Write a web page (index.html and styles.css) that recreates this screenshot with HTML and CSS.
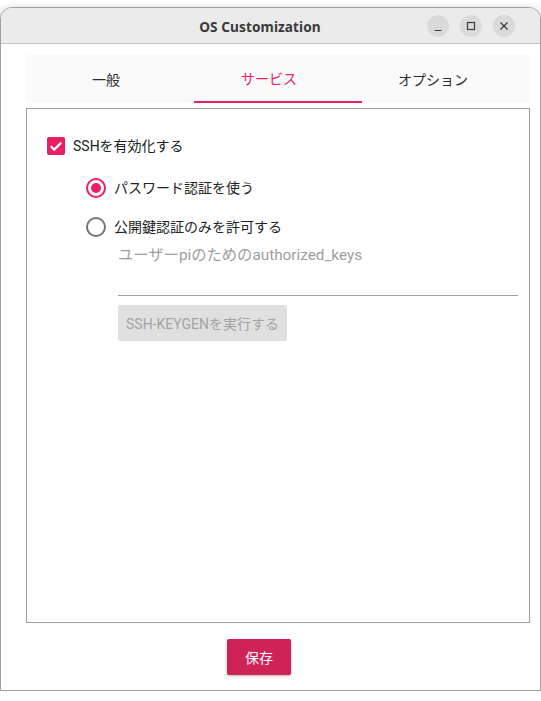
FILE: index.html
```html
<!DOCTYPE html>
<html lang="ja">
<head>
<meta charset="utf-8">
<title>OS Customization</title>
<link rel="stylesheet" href="styles.css">
</head>
<body>
<div class="window">
  <header class="titlebar">
    <div class="title">OS Customization</div>
    <div class="controls">
      <span class="ctl"><svg width="22" height="22" viewBox="0 0 22 22"><path d="M7.5 15.5h7" stroke="#3b3b3b" stroke-width="1.2" fill="none"/></svg></span>
      <span class="ctl"><svg width="22" height="22" viewBox="0 0 22 22"><rect x="7.5" y="7.5" width="7" height="7" stroke="#3b3b3b" stroke-width="1.2" fill="none"/></svg></span>
      <span class="ctl"><svg width="22" height="22" viewBox="0 0 22 22"><path d="M7.5 7.5l7 7M14.5 7.5l-7 7" stroke="#3b3b3b" stroke-width="1.3" fill="none"/></svg></span>
    </div>
  </header>
  <main class="content">
    <nav class="tabs">
      <div class="tab tab-1">一般</div>
      <div class="tab tab-2 active">サービス</div>
      <div class="tab tab-3">オプション</div>
    </nav>
    <section class="panel">
      <div class="row row-check">
        <span class="checkbox"><svg width="18" height="18" viewBox="0 0 18 18"><path d="M3.8 9.2l3.4 3.4 7-7" stroke="#fff" stroke-width="2.2" fill="none"/></svg></span>
        <span class="label">SSHを有効化する</span>
      </div>
      <div class="row row-radio row-radio-1">
        <span class="radio checked"></span>
        <span class="label">パスワード認証を使う</span>
      </div>
      <div class="row row-radio row-radio-2">
        <span class="radio"></span>
        <span class="label">公開鍵認証のみを許可する</span>
      </div>
      <div class="keys">
        <div class="field"><span class="placeholder">ユーザーpiのためのauthorized_keys</span></div>
        <button class="keygen" type="button">SSH-KEYGENを実行する</button>
      </div>
    </section>
    <div class="footer">
      <button class="save" type="button">保存</button>
    </div>
  </main>
</div>
</body>
</html>
```

FILE: styles.css
```css
html {
  margin: 0;
  padding: 0;
  background: #ffffff;
  overflow: hidden;
}

body {
  margin: 0;
  padding-top: 7px;
  font-family: Roboto, "Noto Sans CJK JP", sans-serif;
  font-size: 14px;
  color: #222222;
}

.window {
  box-sizing: border-box;
  width: 541px;
  border: 1px solid #a0a0a0;
  border-radius: 12px 12px 0 0;
  background: #ffffff;
  box-shadow: 0 3px 10px rgba(0, 0, 0, 0.3);
  overflow: hidden;
}

.titlebar {
  display: flex;
  align-items: center;
  height: 36px;
  box-sizing: border-box;
  background: #ebebeb;
  border-bottom: 1px solid #c4c4c4;
}

.title {
  flex: 1;
  text-align: center;
  padding-left: 92px;
  padding-top: 1px;
  font-family: "Noto Sans", "DejaVu Sans", sans-serif;
  font-weight: 700;
  font-size: 13.6px;
  color: #3a3a3a;
  letter-spacing: 0.1px;
}

.controls {
  display: flex;
  gap: 11px;
  padding-right: 25px;
  padding-top: 1px;
}

.ctl {
  width: 22px;
  height: 22px;
  border-radius: 50%;
  background: #dadada;
  display: flex;
}

.content {
  padding: 11px 10px 15px 25px;
}

.tabs {
  display: flex;
  width: 504px;
  height: 48px;
  background: #fafafa;
}

.tab {
  box-sizing: border-box;
  width: 168px;
  display: flex;
  align-items: center;
  font-size: 14px;
  color: #2b2b2b;
  padding-bottom: 1px;
}

.tab-1 { padding-left: 66px; }
.tab-2 { padding-left: 47px; }
.tab-3 { padding-left: 36px; }

.tab.active {
  color: #e91e63;
  border-bottom: 2px solid #e91e63;
  padding-bottom: 0;
}

.panel {
  box-sizing: border-box;
  margin-top: 5px;
  width: 504px;
  height: 515px;
  border: 1px solid #9e9e9e;
  padding: 17px 0 0 20px;
}

.row {
  display: flex;
  align-items: center;
  height: 40px;
}

.row-radio { margin-left: 39px; }
.row-radio-1 { margin-top: 2px; height: 39px; }

.checkbox {
  width: 18px;
  height: 18px;
  border-radius: 2px;
  background: #e91e63;
  display: flex;
  margin-right: 8px;
}

.radio {
  box-sizing: border-box;
  width: 20px;
  height: 20px;
  border-radius: 50%;
  border: 2px solid #737373;
  margin-right: 8px;
  display: flex;
  align-items: center;
  justify-content: center;
}

.radio.checked {
  border-color: #e91e63;
}

.radio.checked::after {
  content: "";
  width: 10px;
  height: 10px;
  border-radius: 50%;
  background: #e91e63;
}

.label {
  font-size: 14px;
  color: #222222;
  line-height: 20px;
}

.keys {
  margin-left: 71px;
}

.field {
  box-sizing: border-box;
  width: 400px;
  height: 49px;
  border-bottom: 1px solid #a0a0a0;
}

.placeholder {
  display: block;
  font-size: 15.3px;
  line-height: 16px;
  color: #9e9e9e;
}

.keygen {
  margin-top: 9px;
  height: 36px;
  padding: 0 8px;
  border: none;
  border-radius: 2px;
  background: #e0e0e0;
  color: #a3a3a3;
  font-family: Roboto, "Noto Sans CJK JP", sans-serif;
  font-size: 14px;
  display: block;
}

.footer {
  display: flex;
  padding-top: 16px;
  padding-left: 201px;
}

.save {
  width: 64px;
  height: 36px;
  border: none;
  border-radius: 2px;
  background: #cf2358;
  color: #ffffff;
  font-family: Roboto, "Noto Sans CJK JP", sans-serif;
  font-size: 14px;
  box-shadow: 0 1px 3px rgba(0, 0, 0, 0.3);
  padding: 0;
}
```
